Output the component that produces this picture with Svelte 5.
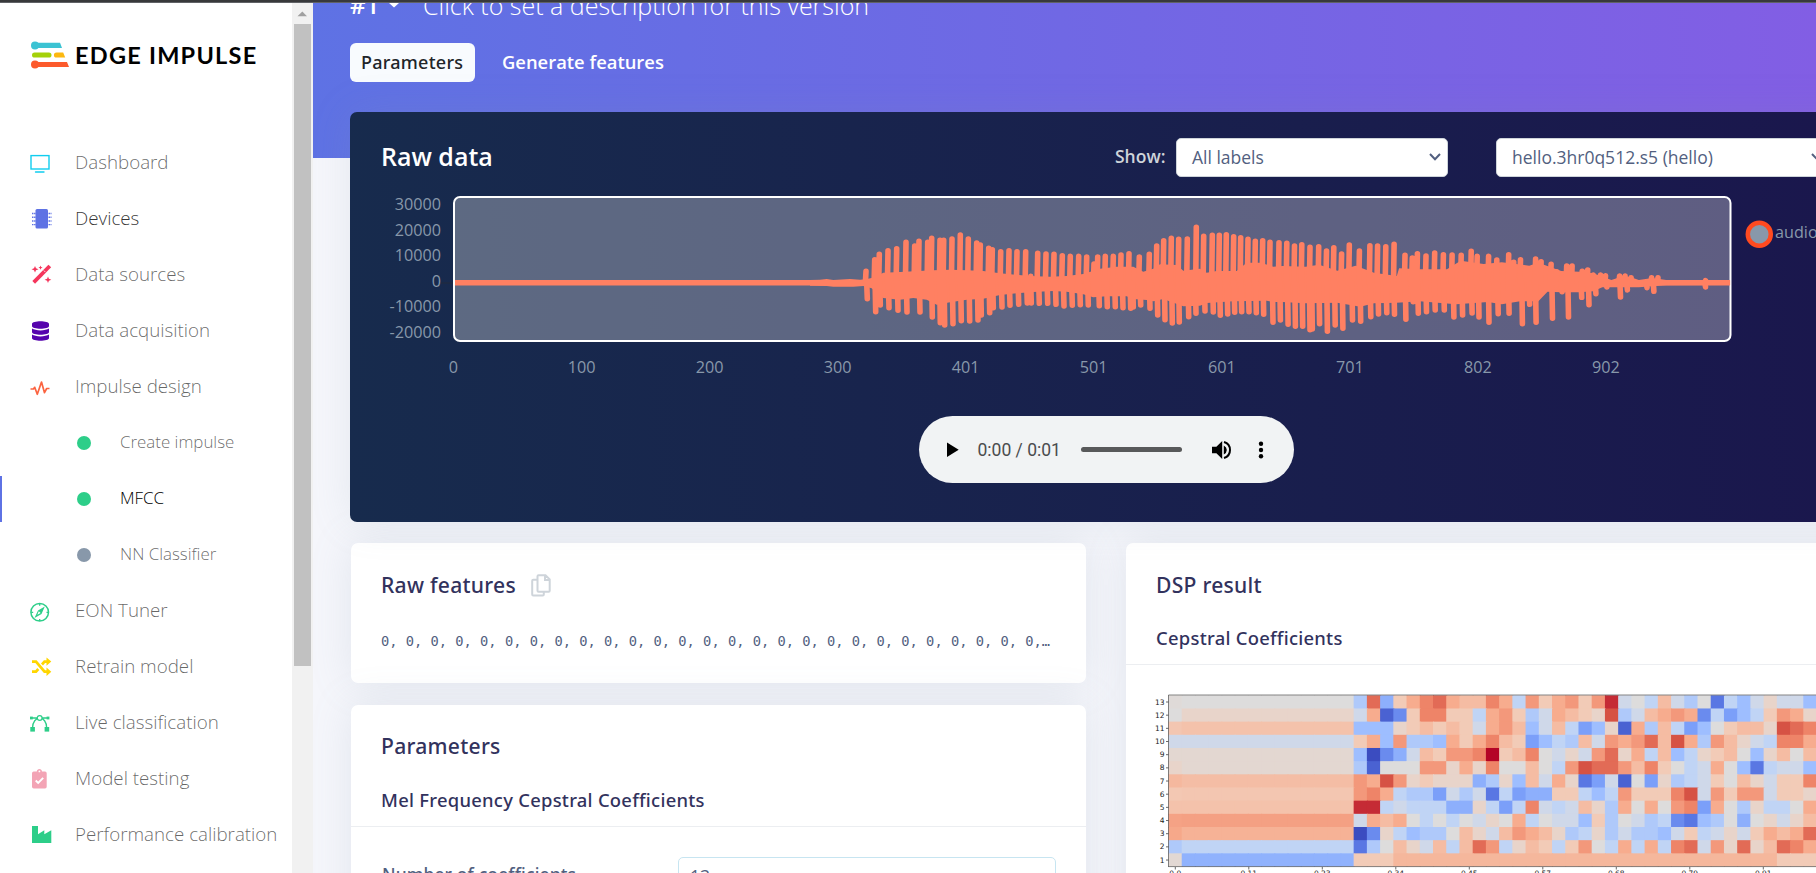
<script>
  const nav = [
    { label: 'Dashboard', icon: 'tv', color: '#11cdef' },
    { label: 'Devices', icon: 'chip', color: '#5e72e4', dark: true },
    { label: 'Data sources', icon: 'wand', color: '#f5365c' },
    { label: 'Data acquisition', icon: 'db', color: '#5603ad' },
    { label: 'Impulse design', icon: 'pulse', color: '#fb6340' },
    { label: 'Create impulse', sub: true, color: '#2dce89' },
    { label: 'MFCC', sub: true, color: '#2dce89', active: true },
    { label: 'NN Classifier', sub: true, color: '#8898aa' },
    { label: 'EON Tuner', icon: 'compass', color: '#2dce89' },
    { label: 'Retrain model', icon: 'shuffle', color: '#ffd600' },
    { label: 'Live classification', icon: 'vector', color: '#2dce89' },
    { label: 'Model testing', icon: 'clip', color: '#f3a4b5' },
    { label: 'Performance calibration', icon: 'factory', color: '#2dce89' }
  ];

  const MID = 282.7;
  const pairs = (s, ox, sx, oy) =>
    s.trim().split(/\s+/).map((p) => {
      const [a, b] = p.split(',').map(Number);
      return [ox + a / sx, oy + b / 3];
    });

  const tops = [
    ...pairs('198,207 224,172 238,156 264,145 290,139 318,120 344,131 357,117 383,120 395,108 420,114 431,114 456,110 481,98 505,110 530,122 541,128 566,138 577,142 602,148 627,145 651,148 677,148 692,222 713,153 738,155 762,156 787,160 811,162 836,162 860,164 882,185 893,164 916,162 940,162 963,158 987,154 1018,164 1048,156 1070,131 1091,115 1114,108 1136,111 1162,110 1189,75 1211,102 1237,99 1258,99 1279,97 1301,103 1322,106 1344,111 1366,117 1388,115 1410,120', 800, 3, 200),
    ...pairs('392,421 409,423 426,431 442,427 460,435 479,433 496,446 512,436 529,455 546,428 568,446 591,430 608,431 626,433 644,426 668,459 684,467 695,454 714,461 733,452 752,457 771,458 791,459 813,447 826,462 851,462 869,473 895,457 906,480 921,472 954,470 966,478 988,486 1000,508 1022,491 1034,491 1056,507 1068,503 1080,518 1096,518 1107,520 1138,521 1150,521 1163,526 1208,526 1222,526 1326,535', 1100, 2.19, 100)
  ];
  const bottoms = [
    ...pairs('202,303 227,342 241,322 267,330 294,338 321,343 360,343 397,358 421,375 434,382 459,378 484,369 509,370 534,367 544,352 569,345 580,330 606,328 630,323 656,320 682,316 694,316 718,317 743,317 768,320 792,325 817,323 841,321 865,322 882,290 898,324 922,327 946,327 969,330 992,332 1000,328 1022,322 1050,332 1073,352 1095,366 1117,376 1138,373 1166,357 1188,347 1215,340 1240,343 1261,353 1283,349 1304,344 1325,342 1347,342 1369,345 1391,350 1419,374', 800, 3, 200),
    ...pairs('395,667 412,680 428,686 444,686 460,696 465,694 481,678 498,701 515,682 532,692 553,667 571,671 593,657 610,649 628,645 645,650 670,665 686,612 697,647 715,642 734,637 754,637 775,658 794,652 815,646 830,658 852,674 872,648 896,647 925,678 941,620 955,674 991,662 1012,582 1026,658 1055,599 1071,621 1086,588 1110,568 1140,598 1155,577 1198,570 1213,581 1326,568', 1100, 2.19, 100)
  ];
  const bodyTop = [
    ...pairs('30,240 60,239 80,237 100,240 150,237 180,239 198,238 224,232 250,218 300,216 400,211 450,209 500,211 550,213 600,220 690,228 750,230 800,228 850,222 900,206 950,200 1000,200 1030,215 1060,206 1080,193 1130,195 1150,212 1200,206 1220,218 1250,213 1310,213 1340,188 1380,188 1405,195', 800, 3, 200),
    ...pairs('379,500 400,498 450,500 480,494 520,512 560,497 600,518 650,528 655,505 700,508 760,508 790,482 840,492 880,487 940,497 960,488 1010,513 1050,515 1080,520 1120,540 1138,532 1160,530 1180,540 1210,534 1240,540 1250,542 1380,541', 1100, 2.19, 100)
  ];
  const bodyBottom = [
    ...pairs('30,257 80,258 100,260 160,260 190,258 215,265 250,294 300,299 340,294 380,299 410,314 450,307 500,299 550,296 600,285 650,280 700,276 760,273 800,275 850,283 880,292 920,289 980,289 1000,297 1040,300 1060,304 1090,297 1150,319 1200,317 1220,309 1300,304 1400,302', 800, 3, 200),
    ...pairs('379,606 400,606 450,610 520,608 570,620 600,610 650,608 700,604 780,613 850,606 880,613 920,604 960,604 980,575 1010,577 1050,577 1080,574 1100,562 1130,562 1180,562 1240,556 1380,555', 1100, 2.19, 100)
  ];
  const bars =
    tops.map(([x, y]) => `M${(x - 0.6).toFixed(1)} ${MID}L${x.toFixed(1)} ${(y + 2.4).toFixed(1)}`).join('') +
    bottoms.map(([x, y]) => `M${(x - 0.6).toFixed(1)} ${MID}L${x.toFixed(1)} ${(y - 2.4).toFixed(1)}`).join('');
  const body =
    'M' + [...bodyTop, ...bodyBottom.slice().reverse()].map(([x, y]) => `${x.toFixed(1)} ${y.toFixed(1)}`).join('L') + 'Z';

  const xTicks = ['0', '100', '200', '300', '401', '501', '601', '701', '802', '902'];
  const yTicks = ['30000', '20000', '10000', '0', '-10000', '-20000'];

  const stops = ['3b4cc0', '5977e3', '7b9ff9', '9ebeff', 'c0d4f5', 'dddcdc', 'f2cbb7', 'f7ac8e', 'ee8468', 'd65244', 'b40426'].map((h) =>
    [0, 2, 4].map((i) => parseInt(h.slice(i, i + 2), 16))
  );
  function color(v) {
    const t = Math.max(0, Math.min(9.999, v / 2));
    const i = Math.floor(t);
    const f = t - i;
    return `rgb(${stops[i].map((c, k) => Math.round(c + (stops[i + 1][k] - c) * f)).join(',')})`;
  }
  // First frame, value of the 13 silent frames, then one letter per voiced frame
  const rows = [
    [10.2, 10, 'hrfmoqronnqoipmopmptjkinjhkcigjljjg'],
    [10, 11, 'jobdmqqmmiopmhjonmlshjnopodiegimpol'],
    [12.3, 12.6, 'ggglmnmnmjopngjnieglbohniegkmnnlsrq'],
    [9, 9, 'mogphhgomoqnmegihnjpoprnsohpnljiqqo'],
    [10.6, 10.6, 'gadfjnmppqumnqkjljprloingilmnkglnkn'],
    [11, 10.6, 'hbkkkpploqkknkkipsrrpnqmkijokgcijjg'.replace('pploqkknkk', 'pplolqkknk')],
    [13.2, 12.9, 'posplmlllfhlgnjolcejbkelhijmknljmmq'],
    [12.2, 12.3, 'pqoihhejhjcieffmmigipmmmqsjpmppjmml'],
    [12.6, 12.6, 'ttijiiifflieiqjijnlhokokpqeokhliiko'],
    [14.5, 14.6, 'jonokikikjlkoikjjgmhkjhidcghkfkljln'],
    [14.2, 13.6, 'adlighhknljnponlhilhjhhgjmijljmonor'],
    [7, 8, 'chknljninrpilnmimpkioioiqrjplrlnrqo'],
    [10.5, 5.2, 'mmmnnnnnnnnnnnnnnnnnnnnnnnnnnnnnmmm']
  ];
  const left = 1168.5;
  const cell = 13.225;
  const rowH = 13.17;
  const cells = rows.flatMap(([first, rest, s], r) =>
    Array.from({ length: 49 }, (_, c) => {
      let v = c === 0 ? first : c < 14 ? rest : s.charCodeAt(c - 14) - 97;
      if (r === 12 && v === 13) v = 13.3;
      return { x: left + c * cell, y: 695.3 + r * rowH, h: r === 12 ? rowH : rowH + 1, fill: color(v) };
    })
  );
  const timeTicks = ['0.0', '0.11', '0.23', '0.34', '0.45', '0.57', '0.68', '0.79', '0.91'];
</script>

{#snippet glyph(name)}
  <svg class="icon" viewBox="0 0 22 22">
    {#if name === 'tv'}
      <rect x="1" y="2.6" width="18" height="13.400" fill="none" stroke="currentColor" stroke-width="1.4" /><path d="M5.5 19h8.5" stroke="currentColor" stroke-width="1.4" stroke-linecap="round" />
    {:else if name === 'chip'}
      <rect x="5.5" y="0" width="12.5" height="19.5" rx="1.5" fill="currentColor" /><path d="M2 4.5h19.5M2 8.3h19.5M2 12h19.5M2 15.6h19.5" stroke="currentColor" stroke-width="1.4" stroke-dasharray="1.2 .5" />
    {:else if name === 'wand'}
      <path d="M3.700 17.300 19.800 1" stroke="currentColor" stroke-width="3.800" /><path d="m13.800 5.500 1.600 1.600" stroke="#fff" stroke-width=".8" /><path fill="currentColor" d="m5 1 1 2.200 2.500 1-2.500 1L5 7.500 4 5.200l-2.500-1L4 3.200zM10.500.5l.6 1.500 1.500.6-1.500.6-.6 1.500-.6-1.500-1.500-.6L9.900 2zM18 11.500l.9 2.300 2.400.900-2.400 1L18 18l-.9-2.300-2.500-1 2.500-.9z" />
    {:else if name === 'db'}
      <path fill="currentColor" d="M2 3c0-3.600 17-3.600 17 0v2c0 3.600-17 3.600-17 0zM2 7.600c3.500 2.400 13.500 2.400 17 0V11c0 3.600-17 3.600-17 0zM2 13.600c3.500 2.400 13.500 2.400 17 0V17c0 3.600-17 3.600-17 0z" />
    {:else if name === 'pulse'}
      <path d="M.5 12h3l1.200-1.700 2.600 7L11.500 5l3 10.700 2.200-4.200h2.800" fill="none" stroke="currentColor" stroke-width="1.700" stroke-linejoin="round" />
    {:else if name === 'compass'}
      <circle cx="9.700" cy="11.300" r="8.800" fill="none" stroke="currentColor" stroke-width="1.500" /><path d="M9.700 2.800v2M9.700 18v2M1.200 11.300h2M16.500 11.300h2" stroke="currentColor" stroke-width="1.300" /><path fill="currentColor" fill-rule="evenodd" d="M14.800 5.500 11.500 13 4.500 17 8 9.500zM8.800 10.300 7.300 13.700l3.300-1.600z" />
    {:else if name === 'shuffle'}
      <path d="M2 4.700h4l8.500 10H18M2 14.700h4l2.300-2.700M12 7.500 14.500 4.700H18" fill="none" stroke="currentColor" stroke-width="2.700" /><path fill="currentColor" d="m16.500.5 4.800 4.100-4.800 4.200zM16.500 10.500l4.800 4.200-4.800 4.200z" />
    {:else if name === 'vector'}
      <path d="M1 5h17.500M2.500 15C2.500 9 6 5 9.700 5s7 4 7 10" fill="none" stroke="currentColor" stroke-width="1.300" /><circle cx="9.700" cy="5" r="2.400" fill="#fff" stroke="currentColor" stroke-width="1.200" /><rect x="0" y="3.600" width="2.800" height="2.800" fill="currentColor" /><rect x="16.600" y="3.600" width="2.800" height="2.800" fill="currentColor" /><rect x=".3" y="14" width="4.600" height="4.600" fill="currentColor" /><rect x="14.600" y="14" width="4.600" height="4.600" fill="currentColor" />
    {:else if name === 'clip'}
      <path fill="currentColor" d="M3.800 2.500h3C6.800-.9 12-.9 12 2.500h3q1.700 0 1.700 1.700v13.600q0 1.700-1.700 1.700H3.800Q2 19.500 2 17.800V4.200q0-1.700 1.800-1.700z" /><circle cx="9.400" cy="2.400" r=".9" fill="#fff" /><path d="m5.700 11.500 2.500 2.500 5-5.200" fill="none" stroke="#fff" stroke-width="1.900" />
    {:else if name === 'factory'}
      <path fill="currentColor" d="M2 18.100V1h6v8.300l6.300-4v4l7-4v12.800z" />
    {/if}
  </svg>
{/snippet}

<div class="screen">
  <div class="strip"></div>
  <div class="shell">
    <aside>
      <div class="logo">
        <svg width="40" height="28" viewBox="0 0 40 28">
          <circle cx="5" cy="4.500" r="4" fill="#3bc3d3" /><path d="M5 1.800h25l2 5.200H5z" fill="#3bc3d3" />
          <rect x="2" y="11.400" width="19.500" height="5.200" rx="2.600" fill="#a4d10a" /><path d="M26.500 11.400h6.700l2 5.200h-8.700a2.600 2.600 0 0 1 0-5.200z" fill="#fcb810" />
          <circle cx="5" cy="23.500" r="4" fill="#fc5a2c" /><path d="M5 20.900h32l2 5.200H5z" fill="#fc5a2c" />
        </svg>
        <span>EDGE IMPULSE</span>
      </div>
      <nav>
        {#each nav as n}
          <div class="item" class:sub={n.sub} class:active={n.active} class:dark={n.dark}>
            <span class="mark" style="color:{n.color}">
              {#if n.icon}{@render glyph(n.icon)}{:else}<i></i>{/if}
            </span>
            <span class="label">{n.label}</span>
          </div>
        {/each}
      </nav>
    </aside>
    <div class="scroll">
      <svg width="21" height="20" viewBox="0 0 21 20"><path d="M5.500 13.200 10.300 8.500 15 13.200z" fill="#a0a0a0" /></svg>
      <div class="thumb"></div>
    </div>
    <main>
      <header>
        <div class="version">
          <b>#1</b>
          <svg width="10" height="6" viewBox="0 0 10 6"><path d="M0 0h10L5 4.500z" fill="#fff" /></svg>
          <span>Click to set a description for this version</span>
        </div>
        <div class="tabs"><span class="tab on">Parameters</span><span class="tab">Generate features</span></div>
      </header>

      <section class="raw">
        <div class="rawhead">
          <h2>Raw data</h2>
          <label for="labels">Show:</label>
          <div class="select" id="labels"><span>All labels</span><svg width="12" height="8" viewBox="0 0 12 8"><path d="m1 1 5 5.200L11 1" fill="none" stroke="#525f7f" stroke-width="2" /></svg></div>
          <div class="select file"><span>hello.3hr0q512.s5 (hello)</span><svg width="12" height="8" viewBox="0 0 12 8"><path d="m1 1 5 5.200L11 1" fill="none" stroke="#525f7f" stroke-width="2" /></svg></div>
        </div>
        <svg class="chart" viewBox="350 190 1466 196" width="1466" height="196">
          <path d="M441 283h12" stroke="#222a3c" stroke-width="1" />
          <rect x="454" y="197" width="1276.500" height="144" rx="6" fill="#fff" fill-opacity=".3" stroke="#fff" stroke-width="2" />
          <path d="M455 282.700H1730" stroke="#ff8062" stroke-width="5.600" />
          <path d={body} fill="#ff8062" />
          <path d={bars} stroke="#ff8062" stroke-width="5.600" stroke-linecap="round" fill="none" />
          {#each yTicks as t, i}<text x="441" y={210 + i * 25.600} text-anchor="end">{t}</text>{/each}
          {#each xTicks as t, i}<text x={453.500 + i * 128.050} y="373" text-anchor="middle">{t}</text>{/each}
          <circle cx="1759.300" cy="234.300" r="11.500" fill="#8898aa" stroke="#ff4a20" stroke-width="4.500" />
          <text x="1775" y="238">audio</text>
        </svg>
        <div class="player">
          <svg class="play" width="12" height="16" viewBox="0 0 12 16"><path d="M0 .5 11.700 7.800 0 15z" /></svg>
          <span>0:00 / 0:01</span>
          <div class="track"></div>
          <svg class="vol" width="20" height="20" viewBox="0 0 20 20"><path d="M0 6.700h4.400L10.200 1v18L4.400 13.300H0zM11.800 5.500q3 1.700 3 4.500t-3 4.500z" /><path d="M12 2q6 1.800 6 8t-6 8" fill="none" stroke="#000" stroke-width="2" /></svg>
          <svg class="dots" width="6" height="20" viewBox="0 0 6 20"><circle cx="3" cy="3.700" r="2.200" /><circle cx="3" cy="10" r="2.200" /><circle cx="3" cy="16.300" r="2.200" /></svg>
        </div>
      </section>

      <div class="grid">
        <div class="col">
          <section class="card features">
            <div class="title"><h3>Raw features</h3>
              <svg width="20" height="23" viewBox="0 0 20 23"><path d="M6.500 5.800H2.200Q1.200 5.800 1.200 6.800v13.700q0 1 1 1h9.600q1 0 1-1V18M7.500 1.200h7l4.200 4.200v11.400q0 1-1 1H7.500q-1 0-1-1V2.200q0-1 1-1zM14 1.500v4.400h4.500" fill="none" stroke="#ced4da" stroke-width="2" /></svg>
            </div>
            <div class="mono">{'0, '.repeat(26)}0,…</div>
          </section>
          <section class="card params">
            <h3>Parameters</h3>
            <h4>Mel Frequency Cepstral Coefficients</h4>
            <div class="field"><span>Number of coefficients</span><div class="input">13</div></div>
          </section>
        </div>
        <section class="card dsp">
          <h3>DSP result</h3>
          <h4>Cepstral Coefficients</h4>
          <svg class="heat" viewBox="1126 665 690 208" width="690" height="208">
            {#each cells as c}<rect x={c.x} y={c.y} width={cell + 1} height={c.h} fill={c.fill} />{/each}
            <path d="M1168.500 695H1816M1168.500 866.600H1816M1168.500 695v172" stroke="#333" stroke-opacity=".6" stroke-width="1" fill="none" />
            {#each Array(13) as _, i}
              <path d="M1166 {702 + i * 13.170}h2.500" stroke="#444" stroke-width=".8" />
              <text x="1164.500" y={704.600 + i * 13.170} text-anchor="end">{13 - i}</text>
            {/each}
            {#each timeTicks as t, i}
              <path d="M{1175.300 + i * 73.500} 867v2.500" stroke="#444" stroke-width=".8" />
              <text x={1175.300 + i * 73.500} y="876" text-anchor="middle">{t}</text>
            {/each}
          </svg>
        </section>
      </div>
    </main>
  </div>
</div>

<style>
  :global(body) { margin: 0; overflow: hidden; }
  * { box-sizing: border-box; }
  .screen { width: 1816px; height: 873px; overflow: hidden; display: flex; flex-direction: column; font-family: 'Open Sans', sans-serif; color: #525f7f; background: #f5f6fb; }
  .strip { height: 3px; flex: none; background: #38393b; border-bottom: 1px solid #606266; }
  .shell { display: flex; height: 870px; overflow: hidden; }
  aside { width: 292px; flex: none; background: #fff; }
  .logo { height: 131px; padding: 38px 0 0 30px; display: flex; align-items: flex-start; }
  .logo span { font: 700 23.500px/28px Lato, sans-serif; letter-spacing: 1.250px; color: #000; margin-left: 5px; white-space: nowrap; }
  .item { height: 56px; display: flex; align-items: center; padding-left: 30px; font-size: 18.750px; font-weight: 300; color: rgba(0, 0, 0, .6); }
  .mark { width: 45px; display: flex; }
  .icon { width: 22px; height: 22px; overflow: visible; margin-top: 4px; }
  .label { white-space: nowrap; line-height: 24px; }
  .item.dark { color: rgba(0, 0, 0, .8); }
  .item.sub { padding-left: 77px; font-size: 16.900px; }
  .sub .mark { width: 43px; }
  .mark i { width: 14px; height: 14px; border-radius: 50%; background: currentColor; margin-top: 1px; }
  .item.active { color: #000; background: linear-gradient(#5e72e4, #5e72e4) 0 6px / 2px 46px no-repeat; }
  .scroll { width: 21px; flex: none; background: #f1f1f1; }
  .scroll svg { display: block; }
  .thumb { width: 17px; height: 642px; margin: 1px 0 0 2px; background: #c1c1c1; }
  main { width: 1503px; flex: none; overflow: hidden; }
  header { height: 155px; padding: 0 37px; background: linear-gradient(87deg, #5e72e4 0, #825ee4 100%); color: #fff; }
  .version { height: 40px; display: flex; align-items: flex-start; font-size: 25px; line-height: 34px; white-space: nowrap; }
  .version b { font-weight: 600; margin-top: -15px; width: 39px; font-size: 24px; }
  .version svg { width: 10px; margin-right: 24px; }
  .version span { font-weight: 300; margin-top: -15px; }
  .tabs { display: flex; gap: 16px; font-size: 18.400px; line-height: 38px; }
  .tab { padding: 0 11px; font-weight: 600; height: 39px; border-radius: 6px; }
  .tab.on { background: #f8fbfe; color: #212529; font-family: 'Noto Sans', 'Open Sans', sans-serif; font-weight: 500; font-size: 18px; letter-spacing: .25px; width: 125px; }
  .raw { position: relative; margin: -46px 0 0 37px; height: 410px; width: 1600px; border-radius: 7px; background: linear-gradient(87deg, #172b4d 0, #1a174d 92%); box-shadow: 0 0 40px rgba(136, 152, 170, .15); }
  .rawhead { display: flex; height: 78px; padding: 26px 0 0 31px; }
  h2 { margin: 0; font-size: 25px; line-height: 37px; font-weight: 600; color: #fff; width: 734px; }
  label { font-size: 17.500px; line-height: 37px; font-weight: 600; color: #ced4da; width: 61px; }
  .select { width: 272px; height: 39px; background: #fff; border: 1px solid #ced4da; border-radius: 5px; display: flex; justify-content: space-between; align-items: center; padding: 0 6px 1px 15px; font-size: 17.500px; white-space: nowrap; }
  .select.file { width: 332px; margin-left: 48px; padding-right: 4px; }
  .chart { display: block; font-size: 16.200px; }
  .chart text { fill: #8898aa; }
  .player { width: 375px; height: 67px; margin: 30px 0 0 569px; border-radius: 34px; background: #f1f3f4; display: flex; align-items: center; padding-left: 28px; font-family: Roboto, sans-serif; font-size: 17.500px; color: #4a4c4e; }
  .player span { width: 103px; margin-left: 18.500px; white-space: nowrap; }
  .track { width: 101px; height: 5px; border-radius: 3px; background: #58595a; }
  .vol { margin-left: 30px; }
  .dots { margin-left: 26px; }
  .grid { display: flex; gap: 40px; padding: 21px 0 0 38px; }
  .col { width: 735px; display: flex; flex-direction: column; gap: 22px; flex: none; }
  .card { background: #fff; border-radius: 7px; box-shadow: 0 0 40px rgba(136, 152, 170, .17); }
  .features { height: 140px; padding: 26px 30px 0; }
  .title { display: flex; align-items: center; gap: 15px; }
  h3, h4 { margin: 0; font-family: 'Noto Sans', 'Open Sans', sans-serif; font-weight: 500; color: #32325d; white-space: nowrap; letter-spacing: .27px; }
  h3 { font-size: 21.100px; line-height: 32px; }
  h4 { font-size: 18.400px; line-height: 28px; }
  .mono { font: 13.720px/20px 'DejaVu Sans Mono', monospace; margin: 30px 0 0; white-space: nowrap; overflow: hidden; }
  .params { height: 400px; padding-top: 25px; }
  .params h3, .params h4 { padding-left: 30px; }
  .params h4 { margin-top: 24px; height: 41px; border-bottom: 1px solid #eceef1; }
  .field { display: flex; padding: 30px 0 0 31px; font-size: 17.500px; }
  .field span { width: 296px; line-height: 40px; margin-top: -3px; font-family: 'Noto Sans', 'Open Sans', sans-serif; font-weight: 500; letter-spacing: .12px; }
  .input { width: 378px; height: 46px; border: 1px solid #c7e5f1; border-radius: 5px; padding-left: 11px; line-height: 36px; }
  .dsp { width: 900px; height: 600px; flex: none; padding-top: 26px; }
  .dsp h3, .dsp h4 { padding-left: 30px; }
  .dsp h4 { margin-top: 23px; height: 41px; border-bottom: 1px solid #eceef1; }
  .heat { display: block; }
  .heat text { font: 7.500px 'DejaVu Sans', sans-serif; fill: #222; }
</style>
